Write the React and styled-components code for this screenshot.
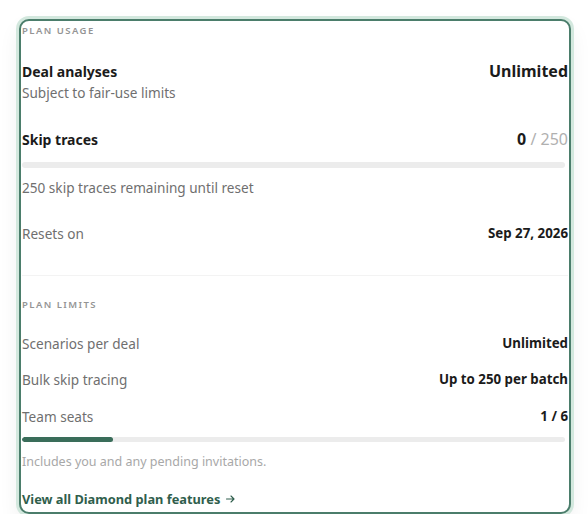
import React from "react";
import styled, { createGlobalStyle } from "styled-components";

const GlobalStyle = createGlobalStyle`
  body {
    margin: 0;
    background: #ffffff;
    font-family: "Noto Sans", "Open Sans", sans-serif;
  }
`;

const Page = styled.div`
  padding: 19px 0 0 19px;
`;

const Card = styled.section`
  box-sizing: border-box;
  width: 552px;
  height: 495px;
  border: 2px solid #4b7d6b;
  border-radius: 10px;
  box-shadow: 0 0 0 3px #d3e8de, 0 10px 22px rgba(0, 0, 0, 0.07);
  padding: 3px 1px 0 1px;
  display: flex;
  flex-direction: column;
  background: #fff;
`;

const SectionLabel = styled.div`
  font-size: 9.5px;
  line-height: 14px;
  letter-spacing: 1.45px;
  font-weight: 600;
  text-transform: uppercase;
  color: #949494;
  margin-top: ${({ top }) => top || 0}px;
`;

const Row = styled.div`
  display: flex;
  justify-content: space-between;
  align-items: center;
  height: 20px;
  margin-top: ${({ top }) => top || 0}px;
`;

const Name = styled.span`
  font-size: 14px;
  font-weight: 700;
  color: #1b1b1b;
`;

const Label = styled.span`
  font-size: 13.6px;
  color: #6f6f6f;
`;

const Value = styled.span`
  font-size: ${({ large }) => (large ? 16 : 13.3)}px;
  font-weight: 700;
  color: #1b1b1b;
`;

const Muted = styled.span`
  font-weight: 400;
  color: #b0b0b0;
`;

const Note = styled.div`
  font-size: ${({ small }) => (small ? 12.5 : 13.6)}px;
  line-height: 18px;
  color: ${({ small }) => (small ? "#a8a8a8" : "#6f6f6f")};
  margin-top: ${({ top }) => top || 0}px;
`;

const Track = styled.div`
  height: ${({ h }) => h}px;
  margin-top: ${({ top }) => top || 0}px;
  margin-right: 3px;
  border-radius: 4px;
  background: #ececec;
  overflow: hidden;
`;

const Fill = styled.div`
  height: 100%;
  border-radius: 4px;
  background: #3a6d5a;
`;

const Divider = styled.hr`
  border: none;
  height: 1px;
  background: #f3f3f3;
  margin: ${({ top }) => top || 0}px 0 0;
`;

const Link = styled.a`
  display: flex;
  align-items: center;
  gap: 6px;
  margin-top: ${({ top }) => top || 0}px;
  line-height: 18px;
  font-size: 12.8px;
  font-weight: 700;
  color: #2f5e4c;
  text-decoration: none;
`;

const ArrowIcon = () => (
  <svg width="9" height="8" viewBox="0 0 9 8" fill="none">
    <path
      d="M0.5 4H8M5 1l3 3-3 3"
      stroke="#2f5e4c"
      strokeWidth="1.1"
      strokeLinecap="round"
      strokeLinejoin="round"
    />
  </svg>
);

export default function App() {
  const seats = { used: 1, total: 6 };
  return (
    <>
      <GlobalStyle />
      <Page>
        <Card>
          <SectionLabel>Plan usage</SectionLabel>
          <Row top={23}>
            <Name>Deal analyses</Name>
            <Value large>Unlimited</Value>
          </Row>
          <Note top={3}>Subject to fair-use limits</Note>
          <Row top={27}>
            <Name>Skip traces</Name>
            <Value large>
              0 <Muted>/ 250</Muted>
            </Value>
          </Row>
          <Track h={6} top={13}>
            <Fill style={{ width: "0%" }} />
          </Track>
          <Note top={11}>250 skip traces remaining until reset</Note>
          <Row top={26}>
            <Label>Resets on</Label>
            <Value>Sep 27, 2026</Value>
          </Row>
          <Divider top={32} />
          <SectionLabel top={22}>Plan limits</SectionLabel>
          <Row top={21}>
            <Label>Scenarios per deal</Label>
            <Value>Unlimited</Value>
          </Row>
          <Row top={16}>
            <Label>Bulk skip tracing</Label>
            <Value>Up to 250 per batch</Value>
          </Row>
          <Row top={17}>
            <Label>Team seats</Label>
            <Value>
              {seats.used} / {seats.total}
            </Value>
          </Row>
          <Track h={5} top={11}>
            <Fill style={{ width: `${(seats.used / seats.total) * 100}%` }} />
          </Track>
          <Note small top={11}>
            Includes you and any pending invitations.
          </Note>
          <Link top={19} href="#">
            View all Diamond plan features <ArrowIcon />
          </Link>
        </Card>
      </Page>
    </>
  );
}
